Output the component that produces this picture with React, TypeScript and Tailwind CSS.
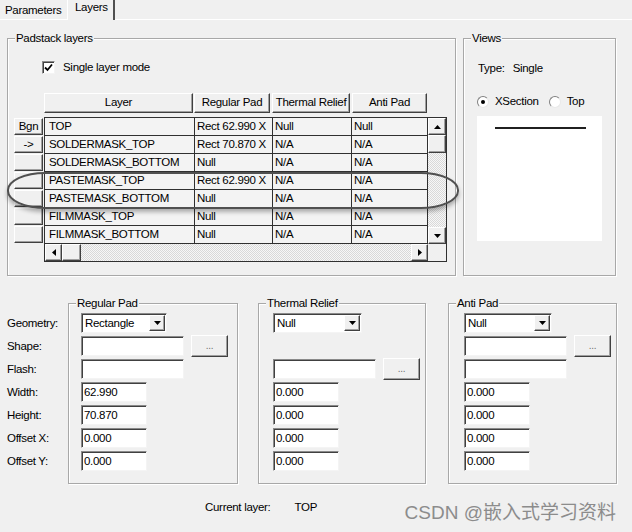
import React from "react";

const raised =
  "bg-[#f0f0f0] border border-t-white border-l-white border-r-[#404040] border-b-[#404040] shadow-[inset_-1px_-1px_0_#a0a0a0]";
const sunken =
  "bg-white border border-t-[#8a8a8a] border-l-[#8a8a8a] border-r-[#f4f4f4] border-b-[#f4f4f4] shadow-[inset_1px_1px_0_#404040]";
const track =
  "[background:repeating-conic-gradient(#d9d9d9_0_25%,#f7f7f7_0_50%)_0_0/2px_2px]";

function Group({
  label,
  className = "",
  children,
}: {
  label: string;
  className?: string;
  children?: React.ReactNode;
}) {
  return (
    <div
      className={`flex flex-col border border-[#a8a8a8] shadow-[inset_1px_1px_0_#fff,1px_1px_0_#fff] ${className}`}
    >
      <span className="self-start -mt-[8px] ml-[7px] px-[1px] h-[14px] leading-[14px] bg-[#f0f0f0] whitespace-nowrap">
        {label}
      </span>
      {children}
    </div>
  );
}

function Tri({ dir }: { dir: "up" | "down" | "left" | "right" }) {
  const pts = {
    up: "0,4 7,4 3.5,0",
    down: "0,0 7,0 3.5,4",
    left: "4,0 4,7 0,3.5",
    right: "0,0 0,7 4,3.5",
  }[dir];
  const w = dir === "up" || dir === "down" ? 7 : 4;
  const h = dir === "up" || dir === "down" ? 4 : 7;
  return (
    <svg width={w} height={h} viewBox={`0 0 ${w} ${h}`}>
      <polygon points={pts} fill="#000" />
    </svg>
  );
}

function Select({ value, w }: { value: string; w: string }) {
  return (
    <div className={`${sunken} ${w} h-[20px] flex items-center`}>
      <span className="flex-1 pl-[3px] leading-[14px]">{value}</span>
      <div className={`${raised} w-[16px] h-[16px] flex items-center justify-center mr-[1px]`}>
        <Tri dir="down" />
      </div>
    </div>
  );
}

function Input({ value = "", w }: { value?: string; w: string }) {
  return (
    <div className={`${sunken} ${w} h-[20px] flex items-center pl-[2px] leading-[14px]`}>
      {value}
    </div>
  );
}

function Dots() {
  return (
    <div
      className={`${raised} w-[37px] h-[22px] ml-[7px] flex items-center justify-center text-[10px] text-[#707070] leading-none`}
    >
      ...
    </div>
  );
}

function Row({ children }: { children?: React.ReactNode }) {
  return <div className="h-[20px] mb-[3px] flex items-center">{children}</div>;
}

const rows = [
  ["Bgn", "TOP", "Rect 62.990 X", "Null", "Null"],
  ["->", "SOLDERMASK_TOP", "Rect 70.870 X", "N/A", "N/A"],
  ["", "SOLDERMASK_BOTTOM", "Null", "N/A", "N/A"],
  ["", "PASTEMASK_TOP", "Rect 62.990 X", "N/A", "N/A"],
  ["", "PASTEMASK_BOTTOM", "Null", "N/A", "N/A"],
  ["", "FILMMASK_TOP", "Null", "N/A", "N/A"],
  ["", "FILMMASK_BOTTOM", "Null", "N/A", "N/A"],
];

export default function App() {
  return (
    <div className="relative w-[632px] h-[532px] overflow-hidden bg-[#f0f0f0] text-[11.5px] tracking-[-0.3px] text-black font-['Liberation_Sans','Noto_Sans_CJK_SC',Arial,sans-serif]">
      {/* Tabs */}
      <div className="flex h-[20px]">
        <div className="w-[67px] h-[18px] mt-[2px] pl-[5px] flex items-center border-b border-white">
          Parameters
        </div>
        <div className="w-[48px] h-[20px] pl-[7px] pb-[4px] flex items-center border-l border-white border-r-2 border-r-[#505050]">
          Layers
        </div>
        <div className="flex-1 h-[20px] border-b border-white" />
      </div>

      {/* Top groups */}
      <div className="flex gap-[7px] pl-[7px] mt-[18px]">
        <Group label="Padstack layers" className="w-[449px] h-[238px]">
          <div className="mt-[16px] ml-[34px] flex items-center h-[13px]">
            <div className={`${sunken} w-[13px] h-[13px] flex items-center justify-center`}>
              <svg width="9" height="9" viewBox="0 0 9 9">
                <path d="M1 4.5 L3.5 7 L8 1.5" stroke="#000" strokeWidth="1.8" fill="none" />
              </svg>
            </div>
            <span className="ml-[8px]">Single layer mode</span>
          </div>

          {/* Header */}
          <div className="mt-[19px] ml-[36px] flex h-[20px]">
            <div className={`${raised} w-[149px] mr-[1px] flex items-center justify-center`}>Layer</div>
            <div className={`${raised} w-[76px] mr-[2px] flex items-center justify-center`}>Regular Pad</div>
            <div className={`${raised} w-[78px] mr-[2px] flex items-center justify-center whitespace-nowrap`}>
              Thermal Relief
            </div>
            <div className={`${raised} w-[75px] flex items-center justify-center`}>Anti Pad</div>
          </div>

          {/* Body */}
          <div className="mt-[4px] ml-[6px] flex">
            <div className="w-[30px] pt-[1px] flex flex-col">
              {rows.map((r, i) => (
                <div
                  key={i}
                  className={`${raised} w-[29px] h-[17px] mb-[1px] flex items-center justify-center leading-none`}
                >
                  {r[0]}
                </div>
              ))}
            </div>
            <div className="border border-[#303030] flex">
              <div className="flex flex-col w-[383px]">
                {rows.map((r, i) => (
                  <div
                    key={i}
                    className="grid grid-cols-[150px_78px_79px_76px] h-[18px]"
                  >
                    {r.slice(1).map((c, j) => (
                      <div
                        key={j}
                        className={`border-b border-r border-[#303030] flex items-center whitespace-nowrap overflow-hidden ${
                          j === 0 ? "pl-[4px]" : "pl-[2px]"
                        } bg-[#f3f3f3]`}
                      >
                        {c}
                      </div>
                    ))}
                  </div>
                ))}
                <div className="h-[17px] flex">
                  <div className={`${raised} w-[17px] h-[17px] flex items-center justify-center`}>
                    <Tri dir="left" />
                  </div>
                  <div className={`${raised} w-[19px] h-[17px]`} />
                  <div className={`flex-1 ${track}`} />
                  <div className={`${raised} w-[17px] h-[17px] flex items-center justify-center`}>
                    <Tri dir="right" />
                  </div>
                </div>
              </div>
              <div className="w-[18px] flex flex-col">
                <div className={`${raised} h-[17px] flex items-center justify-center`}>
                  <Tri dir="up" />
                </div>
                <div className={`${raised} h-[18px]`} />
                <div className={`flex-1 ${track}`} />
                <div className={`${raised} h-[17px] flex items-center justify-center`}>
                  <Tri dir="down" />
                </div>
                <div className="h-[17px] bg-[#f0f0f0]" />
              </div>
            </div>
          </div>
        </Group>

        <Group label="Views" className="w-[153px] h-[238px]">
          <div className="mt-[17px] ml-[14px] flex h-[13px] items-center">
            <span>Type:</span>
            <span className="ml-[8px]">Single</span>
          </div>
          <div className="mt-[20px] ml-[13px] flex items-center h-[14px]">
            <div className="w-[12px] h-[12px] rounded-full bg-white border border-t-[#808080] border-l-[#808080] border-r-[#e8e8e8] border-b-[#e8e8e8] flex items-center justify-center">
              <div className="w-[4px] h-[4px] rounded-full bg-black" />
            </div>
            <span className="ml-[6px]">XSection</span>
            <div className="ml-[10px] w-[12px] h-[12px] rounded-full bg-white border border-t-[#808080] border-l-[#808080] border-r-[#e8e8e8] border-b-[#e8e8e8]" />
            <span className="ml-[6px]">Top</span>
          </div>
          <div className="mt-[7px] ml-[13px] w-[125px] h-[125px] bg-white pt-[11px] pl-[18px]">
            <div className="w-[91px] h-[2px] bg-[#202020]" />
          </div>
        </Group>
      </div>

      {/* Bottom groups */}
      <div className="mt-[27px] pl-[7px] flex items-start">
        <div className="w-[61px] pt-[9px] flex flex-col">
          {["Geometry:", "Shape:", "Flash:", "Width:", "Height:", "Offset X:", "Offset Y:"].map((l) => (
            <div key={l} className="h-[23px] flex items-center">
              {l}
            </div>
          ))}
        </div>

        <Group label="Regular Pad" className="w-[170px] h-[181px]">
          <div className="pt-[3px] pl-[12px]">
            <Row><Select value="Rectangle" w="w-[86px]" /></Row>
            <Row><Input w="w-[103px]" /><Dots /></Row>
            <Row><Input w="w-[103px]" /></Row>
            <Row><Input value="62.990" w="w-[66px]" /></Row>
            <Row><Input value="70.870" w="w-[66px]" /></Row>
            <Row><Input value="0.000" w="w-[66px]" /></Row>
            <Row><Input value="0.000" w="w-[66px]" /></Row>
          </div>
        </Group>

        <Group label="Thermal Relief" className="ml-[20px] w-[168px] h-[181px]">
          <div className="pt-[3px] pl-[14px]">
            <Row><Select value="Null" w="w-[89px]" /></Row>
            <Row />
            <Row><Input w="w-[103px]" /><Dots /></Row>
            <Row><Input value="0.000" w="w-[66px]" /></Row>
            <Row><Input value="0.000" w="w-[66px]" /></Row>
            <Row><Input value="0.000" w="w-[66px]" /></Row>
            <Row><Input value="0.000" w="w-[66px]" /></Row>
          </div>
        </Group>

        <Group label="Anti Pad" className="ml-[22px] w-[169px] h-[181px]">
          <div className="pt-[3px] pl-[15px]">
            <Row><Select value="Null" w="w-[88px]" /></Row>
            <Row><Input w="w-[103px]" /><Dots /></Row>
            <Row><Input w="w-[103px]" /></Row>
            <Row><Input value="0.000" w="w-[66px]" /></Row>
            <Row><Input value="0.000" w="w-[66px]" /></Row>
            <Row><Input value="0.000" w="w-[66px]" /></Row>
            <Row><Input value="0.000" w="w-[66px]" /></Row>
          </div>
        </Group>
      </div>

      {/* Footer */}
      <div className="mt-[12px] flex items-center h-[24px] pl-[205px] pr-[16px]">
        <span>Current layer:</span>
        <span className="ml-[24px]">TOP</span>
        <span className="ml-auto mt-[8px] text-[19px] tracking-normal leading-none text-[#8c8c8c] whitespace-nowrap">
          CSDN @嵌入式学习资料
        </span>
      </div>

      {/* Annotation ellipse */}
      <div className="absolute left-[7px] top-[172px] w-[452px] h-[37px] border-2 border-[#505050] rounded-[38px/18px] shadow-[0_3px_4px_rgba(0,0,0,0.3)] pointer-events-none" />
    </div>
  );
}
